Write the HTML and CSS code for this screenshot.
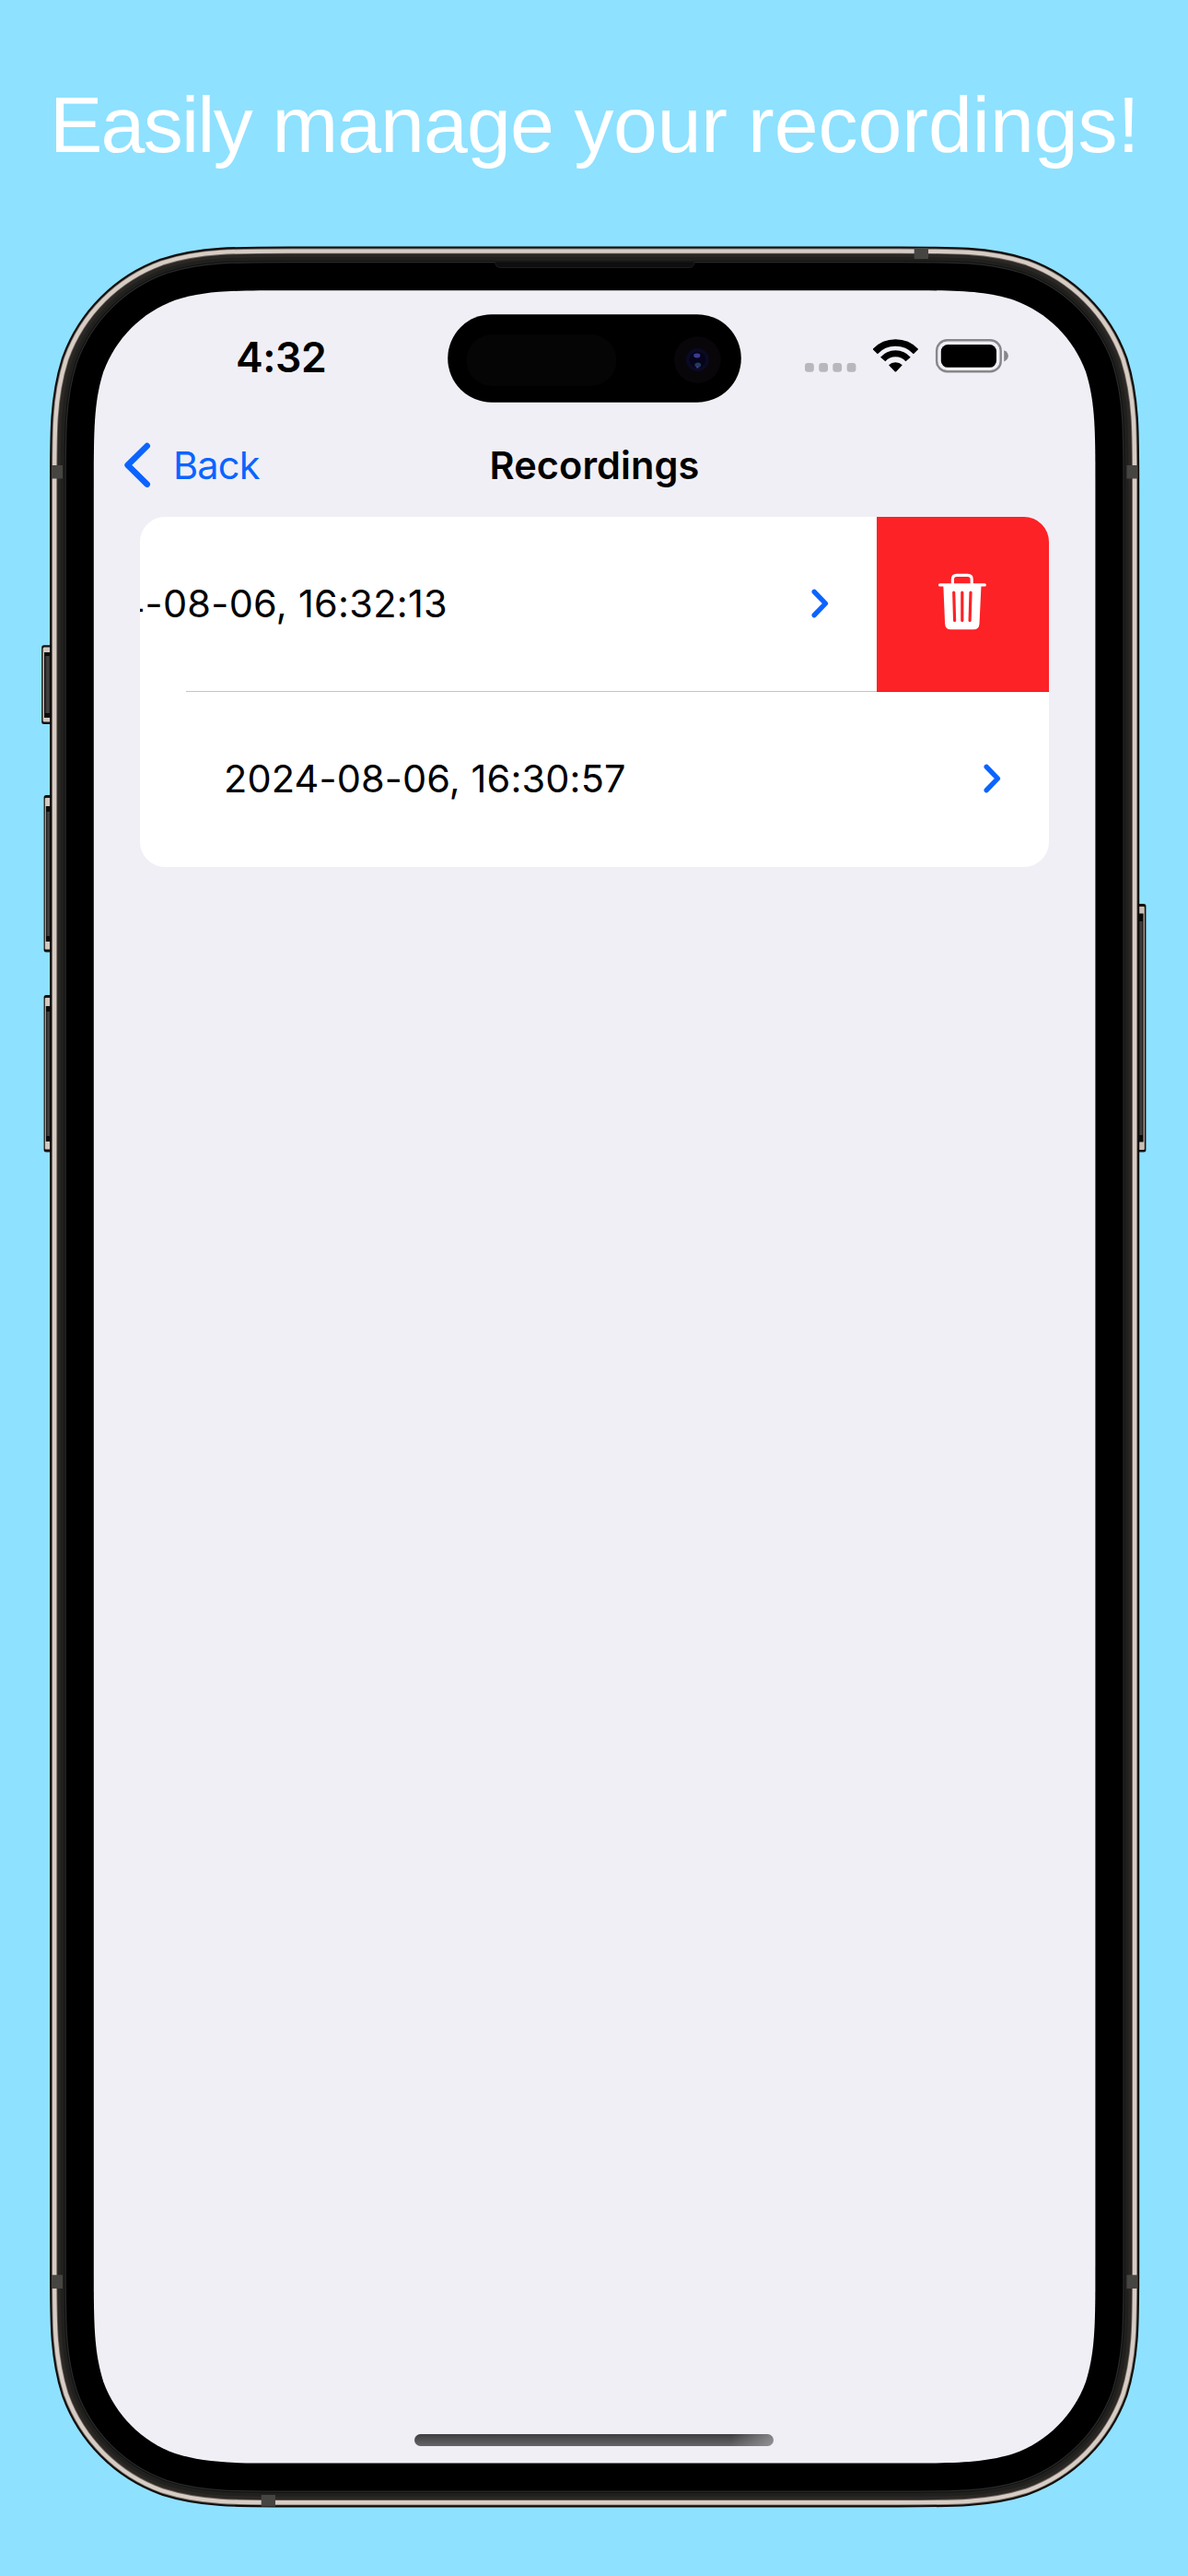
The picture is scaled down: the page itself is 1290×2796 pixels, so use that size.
FILE: index.html
```html
<!DOCTYPE html>
<html lang="en">
<head>
<meta charset="utf-8">
<title>Recordings</title>
<link rel="stylesheet" href="styles.css">
</head>
<body>
<h1 class="headline"><span class="tighter">Easily</span> <span class="tight">manage</span> <span class="snug">your</span> recordings!</h1>

<main class="phone">
  <svg class="phone-frame" viewBox="40 260 1210 2470" aria-hidden="true">
    <defs>
      <path id="outline" d="M315.8 315.2H975.5C1037.1 315.2 1067.9 315.2 1101.1 325.7C1137.3 338.9 1165.8 367.4 1179 403.6C1189.4 436.8 1189.4 467.6 1189.4 529.2V2459.6C1189.4 2521.2 1189.4 2552 1179 2585.2C1165.8 2621.4 1137.3 2649.9 1101.1 2663.1C1067.9 2673.6 1037.1 2673.6 975.5 2673.6H315.8C254.2 2673.6 223.4 2673.6 190.2 2663.1C154 2649.9 125.5 2621.4 112.3 2585.2C101.8 2552 101.8 2521.2 101.8 2459.6V529.2C101.8 467.6 101.8 436.8 112.3 403.6C125.5 367.4 154 338.9 190.2 325.7C223.4 315.2 254.2 315.2 315.8 315.2Z"/>
      <linearGradient id="key" x1="0" x2="1" y1="0" y2="0">
        <stop offset="0" stop-color="#2a2727"/><stop offset=".5" stop-color="#4a4646"/><stop offset="1" stop-color="#1c1a1a"/>
      </linearGradient>
    </defs>
    <!-- side buttons -->
    <g>
      <rect x="45.2" y="700.3" width="14" height="85.6" rx="2.5" fill="#14110f"/>
      <rect x="46.6" y="702.6" width="12" height="81" rx="1.5" fill="#d3c8be"/>
      <rect x="48" y="708" width="8" height="71" fill="#0b0a0a"/>
      <rect x="49" y="712" width="6" height="62" fill="url(#key)"/>
      <rect x="47.6" y="863" width="12" height="170.6" rx="2.5" fill="#14110f"/>
      <rect x="48.8" y="866" width="8" height="164.6" rx="1" fill="#d3c8be"/>
      <rect x="49.8" y="875" width="6" height="147" fill="#0b0a0a"/>
      <rect x="50.4" y="881" width="4.6" height="135" fill="url(#key)"/>
      <rect x="47.6" y="1080" width="12" height="170.6" rx="2.5" fill="#14110f"/>
      <rect x="48.8" y="1083" width="8" height="164.6" rx="1" fill="#d3c8be"/>
      <rect x="49.8" y="1092" width="6" height="147" fill="#0b0a0a"/>
      <rect x="50.4" y="1098" width="4.6" height="135" fill="url(#key)"/>
      <rect x="1232" y="981" width="12.4" height="269.6" rx="2.5" fill="#14110f"/>
      <rect x="1235" y="984" width="7.8" height="264" rx="1" fill="#c9beb4"/>
      <rect x="1236" y="991.5" width="5.6" height="248" fill="#0b0a0a"/>
      <rect x="1237" y="1000" width="4" height="232" fill="url(#key)"/>
    </g>
    <!-- metal band, inner rim and bezel, outermost first -->
    <g fill="none" stroke-linejoin="round">
      <use href="#outline" stroke="#100d0c" stroke-width="95.6"/>
      <use href="#outline" stroke="#7b7068" stroke-width="91.4"/>
      <use href="#outline" stroke="#d7cdc5" stroke-width="89.6"/>
      <use href="#outline" stroke="#6a625c" stroke-width="81"/>
      <use href="#outline" stroke="#2a2724" stroke-width="79.2"/>
      <use href="#outline" stroke="#20201e" stroke-width="72"/>
      <use href="#outline" stroke="#111" stroke-width="64.5"/>
      <use href="#outline" stroke="#2a2a2a" stroke-width="62.5"/>
      <use href="#outline" stroke="#000" stroke-width="60"/>
    </g>
    <!-- antenna bands -->
    <g fill="#464542">
      <path d="M56 505h12v14.5H56zM56 2469.3h12V2484H56zM1223.5 505h12v14.5h-12zM1223.5 2469.3h12V2484h-12z"/>
      <path d="M992.7 269h15.3v12h-15.3zM283.7 2708h15.3v12.5h-15.3z"/>
    </g>
    <!-- earpiece -->
    <path d="M537.7 284H754q0 6.5-6 6.5H543.7q-6 0-6-6.5Z" fill="#0e0e0e" stroke="#1d1d1d"/>
    <use href="#outline" fill="#f0eff5"/>
  </svg>

  <div class="screen">
    <header class="status-bar">
      <span class="clock">4:32</span>
      <svg class="island" viewBox="486 341 319 96" aria-hidden="true">
        <rect x="486.2" y="341.2" width="318.6" height="95.5" rx="47.7" fill="#000"/>
        <rect x="506.5" y="363" width="163" height="56" rx="28" fill="#050505"/>
        <circle cx="757.4" cy="390.5" r="25.3" fill="#080609"/>
        <circle cx="757.4" cy="390.5" r="12.5" fill="#0b0a24"/>
        <circle cx="757.4" cy="390.5" r="8.8" fill="#05041a"/>
        <ellipse cx="756.8" cy="386" rx="3.6" ry="2.4" fill="#3a3a92"/>
        <ellipse cx="757.8" cy="396" rx="3.4" ry="2.6" fill="#1c3d5c"/>
        <circle cx="757.4" cy="398.5" r="1.3" fill="#5a2a8c"/>
      </svg>
      <div class="indicators">
        <svg width="56" height="37" viewBox="874 368 56 37" fill="#b8b7bc" aria-hidden="true">
          <rect x="874" y="394" width="9.8" height="9.8" rx="3.2"/>
          <rect x="889.2" y="394" width="9.8" height="9.8" rx="3.2"/>
          <rect x="904.3" y="394" width="9.8" height="9.8" rx="3.2"/>
          <rect x="919.6" y="394" width="9.8" height="9.8" rx="3.2"/>
        </svg>
        <svg width="49" height="37" viewBox="948 368 49 37" aria-hidden="true">
          <path d="M950.2 381.6A30.6 30.6 0 0 1 994.6 381.6" fill="none" stroke="#000" stroke-width="7.4"/>
          <path d="M958.7 390A18 18 0 0 1 986.1 390" fill="none" stroke="#000" stroke-width="7"/>
          <path d="M965 396.2A10.6 10.6 0 0 1 979.8 396.2L973.2 403.2Q972.4 404 971.6 403.2Z"/>
        </svg>
        <svg width="81" height="37" viewBox="1015 368 81 37" aria-hidden="true">
          <rect x="1017.1" y="369.3" width="69.6" height="34" rx="11.4" fill="none" stroke="#87868b" stroke-width="2.4"/>
          <rect x="1021.8" y="374" width="60.2" height="24.8" rx="7.4"/>
          <path d="M1090.2 380.2C1096.4 382.4 1096.4 390.2 1090.2 392.4Z" fill="#87868b"/>
        </svg>
      </div>
    </header>

    <nav class="nav-bar">
      <a class="back">
        <svg width="30" height="50" viewBox="134 480 30 50" aria-hidden="true"><path d="M159.7 484L138.6 504.8L159.7 525.6"/></svg>
        <span>Back</span>
      </a>
      <h2 class="nav-title">Recordings</h2>
    </nav>

    <ul class="list">
      <li class="row swiped">
        <div class="row-content">
          <span>2024-08-06, 16:32:13</span>
          <svg class="chevron" width="19" height="32" viewBox="0 0 19 32" aria-hidden="true"><path d="M3.2 3.3L15.4 16L3.2 28.7"/></svg>
        </div>
        <button class="delete" aria-label="Delete">
          <svg width="54" height="62" viewBox="0 0 54 62" fill="none" aria-hidden="true">
            <path d="M16.4 13V6.8Q16.4 2.4 20.8 2.4H32.8Q37.2 2.4 37.2 6.8V13" stroke="#fff" stroke-width="3.2"/>
            <path d="M2.6 12.9H51.2" stroke="#fff" stroke-width="3.4" stroke-linecap="round"/>
            <path d="M6.3 13H47.5L45.5 55Q45.2 61.3 39 61.3H14.6Q8.4 61.3 8.1 55Z" fill="#fff"/>
            <path d="M17.7 21L18.6 51.5M26.8 21V51.5M36 21L35.1 51.5" stroke="#fd2226" stroke-width="3.2" stroke-linecap="round"/>
          </svg>
        </button>
      </li>
      <li class="row">
        <div class="row-content">
          <span>2024-08-06, 16:30:57</span>
          <svg class="chevron" width="19" height="32" viewBox="0 0 19 32" aria-hidden="true"><path d="M3.2 3.3L15.4 16L3.2 28.7"/></svg>
        </div>
      </li>
    </ul>

    <div class="home-indicator"></div>
  </div>
</main>
</body>
</html>
```
FILE: styles.css
```css
* {
  box-sizing: border-box;
}

body {
  margin: 0;
  width: 1290px;
  height: 2796px;
  overflow: hidden;
  background: #8ee1ff;
  color: #000;
  font-family: "Inter", "Liberation Sans", sans-serif;
  font-size: 41.5px;
}

svg {
  display: block;
  flex: none;
}

.headline {
  margin: 0;
  padding: 75px 0 0 54px;
  color: #fff;
  font: 400 86px/120px "Liberation Sans", Arial, sans-serif;
  word-spacing: -1.4px;
  white-space: nowrap;
}

.tighter {
  letter-spacing: -1.75px;
}

.tight {
  letter-spacing: -0.88px;
}

.snug {
  letter-spacing: -0.3px;
}

.phone {
  position: relative;
  width: 1183px;
  height: 2455px;
  margin: 72px 0 0 54px;
  padding: 48px;
}

/* The body sits behind the screen, and its buttons reach past the phone's box. */
.phone-frame {
  position: absolute;
  left: -14px;
  top: -7px;
  width: 1210px;
  height: 2470px;
}

.screen {
  position: relative;
  display: flex;
  flex-direction: column;
  height: 100%;
}

.status-bar {
  display: grid;
  grid-template-columns: 384px 319px 1fr;
  align-items: center;
  height: 122px;
  padding-top: 26px;
}

.clock {
  padding: 0 0 3px 154px;
  font-size: 44.6px;
  font-weight: 600;
  letter-spacing: -0.4px;
}

.indicators {
  display: flex;
  gap: 18px;
  padding: 0 0 5px 69px;
}

.nav-bar {
  display: grid;
  grid-template-columns: 1fr auto 1fr;
  align-items: center;
  height: 124px;
  padding: 12px 0 0;
}

.back {
  display: flex;
  align-items: center;
  gap: 24px;
  padding-left: 32px;
  color: #0b64ff;
  letter-spacing: -0.8px;
}

.back path,
.chevron path {
  fill: none;
  stroke: #0b64ff;
  stroke-width: 6.6;
  stroke-linecap: round;
  stroke-linejoin: round;
}

.chevron path {
  stroke-width: 5.4;
}

.nav-title {
  margin: 0;
  font-size: 41.5px;
  font-weight: 600;
  letter-spacing: 0.1px;
}

.list {
  margin: 0 50px;
  padding: 0;
  overflow: hidden;
  list-style: none;
  background: #fff;
  border-radius: 27px;
}

.row {
  position: relative;
  display: flex;
  height: 190px;
}

.row:not(:last-child)::after {
  content: "";
  position: absolute;
  left: 50px;
  right: 0;
  bottom: 0;
  height: 1px;
  background: rgba(60, 60, 67, 0.3);
}

.row-content {
  display: flex;
  flex: none;
  align-items: center;
  justify-content: space-between;
  width: 987px;
  padding: 0 52px 2px 91px;
  letter-spacing: 0.12px;
}

.swiped .row-content {
  margin-left: -187px;
  padding-left: 88.5px;
  letter-spacing: 0.27px;
}

.delete {
  display: flex;
  align-items: center;
  justify-content: center;
  width: 187px;
  padding: 0 1px 6px 0;
  border: 0;
  background: #fd2226;
}

.home-indicator {
  width: 390px;
  height: 13px;
  margin: auto auto 19px 348px;
  border-radius: 7px;
  background:
    linear-gradient(100deg, transparent 88%, rgba(160, 160, 164, 0.75)),
    linear-gradient(#3e3e40, #666668);
}
```
